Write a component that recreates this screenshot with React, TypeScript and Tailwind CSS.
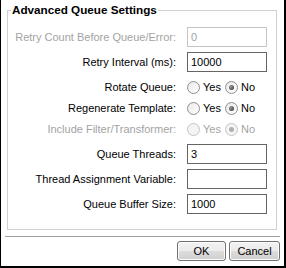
import React from "react";

function Radio({ checked, disabled }: { checked?: boolean; disabled?: boolean }) {
  return (
    <span
      className={
        "flex items-center justify-center w-[13px] h-[13px] rounded-full border " +
        (disabled
          ? "border-[#c4c4c4] bg-[#f4f4f4]"
          : "border-[#8e8f8f] bg-[linear-gradient(135deg,#e8e8e8,#ffffff)]")
      }
    >
      {checked && (
        <span
          className={
            "block w-[5px] h-[5px] rounded-full " +
            (disabled ? "bg-[#b0b0b0]" : "bg-[radial-gradient(circle_at_35%_35%,#9a9a9a,#2f2f2f)]")
          }
        />
      )}
    </span>
  );
}

function RadioRow({ label, disabled }: { label: string; disabled?: boolean }) {
  const c = disabled ? "text-[#a3a3a3]" : "text-black";
  return (
    <>
      <div className={"h-[16px] flex items-center justify-end whitespace-nowrap " + c}>{label}</div>
      <div className={"h-[16px] flex items-center " + c}>
        <Radio disabled={disabled} />
        <span className="ml-[3px]">Yes</span>
        <span className="ml-[4px]">
          <Radio checked disabled={disabled} />
        </span>
        <span className="ml-[3px]">No</span>
      </div>
    </>
  );
}

function InputRow({ label, value, disabled }: { label: string; value: string; disabled?: boolean }) {
  const c = disabled ? "text-[#a3a3a3]" : "text-black";
  return (
    <>
      <div className={"h-[20px] flex items-center justify-end whitespace-nowrap " + c}>{label}</div>
      <div
        className={
          "h-[20px] flex items-center pl-[3px] border bg-white " +
          (disabled ? "border-[#c4c4c4] text-[#a3a3a3]" : "border-[#646464] text-black")
        }
      >
        {value}
      </div>
    </>
  );
}

export default function App() {
  return (
    <div className="w-[286px] h-[268px] bg-white border-l border-r-2 border-b-2 border-black flex flex-col font-['Liberation_Sans',Arial,sans-serif] text-[11px] text-black">
      <fieldset className="mt-[2px] ml-[6px] mr-[7px] border border-[#d0d0d0] pt-[9px] pb-[15px] pr-[9px]">
        <legend className="ml-[3px] px-[1px] h-[16px] leading-[16px] text-[11.7px] font-bold text-black">
          Advanced Queue Settings
        </legend>
        <div className="grid grid-cols-[1fr_80px] gap-x-[11px] gap-y-[5px]">
          <InputRow label="Retry Count Before Queue/Error:" value="0" disabled />
          <InputRow label="Retry Interval (ms):" value="10000" />
          <div className="col-span-2 grid grid-cols-[1fr_80px] gap-x-[11px] gap-y-[5px] my-[2px]">
            <RadioRow label="Rotate Queue:" />
            <RadioRow label="Regenerate Template:" />
            <RadioRow label="Include Filter/Transformer:" disabled />
          </div>
          <InputRow label="Queue Threads:" value="3" />
          <InputRow label="Thread Assignment Variable:" value="" />
          <InputRow label="Queue Buffer Size:" value="1000" />
        </div>
      </fieldset>
      <div className="mt-[6px] mx-[4px] h-px bg-[#a0a0a0]" />
      <div className="mt-[4px] mr-[4px] flex justify-end gap-[3px]">
        <button className="w-[49px] h-[20px] rounded-[3px] border border-[#707070] bg-[linear-gradient(#f2f2f2_0%,#ebebeb_50%,#dddddd_50%,#cfcfcf_100%)] shadow-[inset_0_0_0_1px_#fcfcfc] text-[11px] text-black">
          OK
        </button>
        <button className="w-[51px] h-[20px] rounded-[3px] border border-[#707070] bg-[linear-gradient(#f2f2f2_0%,#ebebeb_50%,#dddddd_50%,#cfcfcf_100%)] shadow-[inset_0_0_0_1px_#fcfcfc] text-[11px] text-black">
          Cancel
        </button>
      </div>
    </div>
  );
}
